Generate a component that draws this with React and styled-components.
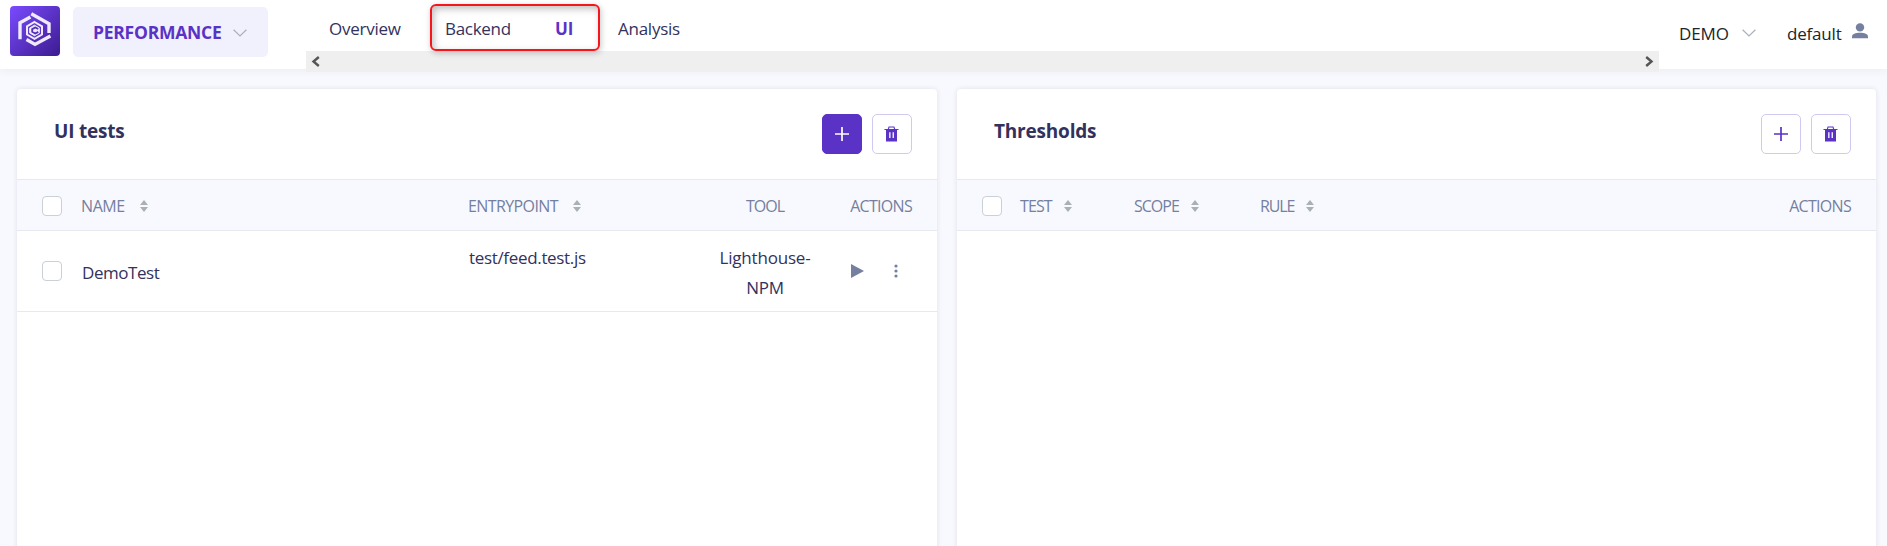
import React from 'react';
import styled, { createGlobalStyle } from 'styled-components';

const GlobalStyle = createGlobalStyle`
  * { box-sizing: border-box; }
  html, body { margin: 0; height: 100%; overflow: hidden; }
  body {
    background: #f8f9fe;
    color: #32325d;
    font-family: "Open Sans", "Noto Sans", sans-serif;
    font-size: 17px;
  }
  #root { height: 100%; }
`;

const Page = styled.div`
  height: 546px;
  overflow: hidden;
`;

const Header = styled.header`
  display: flex;
  align-items: flex-start;
  height: 69px;
  padding-left: 10px;
  background: #fff;
  box-shadow: 0 2px 8px rgba(50, 50, 93, 0.06);
`;

const Logo = styled.svg`
  display: block;
  width: 50px;
  height: 50px;
  margin-top: 6px;
`;

const Label = styled.span`
  white-space: nowrap;
  letter-spacing: ${(p) => p.$ls || 0}px;
`;

const SectionButton = styled.button`
  display: flex;
  align-items: center;
  gap: 12px;
  width: 195px;
  height: 50px;
  margin: 7px 38px 0 13px;
  padding: 0 0 0 20px;
  border: 0;
  border-radius: 5px;
  background: #f1f0fd;
  color: #5b32c6;
  font: 700 17.5px "Open Sans", "Noto Sans", sans-serif;
  svg { margin-top: 2px; }
`;

const Nav = styled.nav`
  width: 1353px;
  height: 72px;
`;

const Tabs = styled.div`
  display: flex;
  align-items: center;
  height: 51px;
  padding: 6px 0 0 23px;
`;

const Tab = styled.a`
  width: ${(p) => p.$w}px;
  line-height: 30px;
  white-space: nowrap;
  letter-spacing: ${(p) => p.$ls || 0}px;
  color: ${(p) => (p.$active ? '#5b32c6' : '#32325d')};
  font-weight: ${(p) => (p.$active ? 700 : 400)};
`;

const TabPair = styled.div`
  position: relative;
  display: flex;
  width: 173px;
`;

const Highlight = styled.div`
  position: absolute;
  left: -15px;
  top: -10px;
  width: 170px;
  height: 47px;
  border: 2px solid #f5151b;
  border-radius: 6px;
  box-shadow: 1px 2px 6px rgba(0, 0, 0, 0.22), inset 2px 3px 7px rgba(0, 0, 0, 0.25);
`;

const ScrollTrack = styled.div`
  display: flex;
  align-items: center;
  justify-content: space-between;
  height: 21px;
  padding: 0 5px;
  background: #efefef;
`;

const Account = styled.div`
  display: flex;
  align-items: center;
  height: 66px;
  padding-left: 20px;
  color: #212529;
`;

const Project = styled.div`
  display: flex;
  align-items: center;
  width: 108px;
  gap: 13px;
`;

const User = styled.div`
  display: flex;
  align-items: center;
  gap: 10px;
  svg { margin-bottom: 5px; }
`;

const Main = styled.main`
  display: grid;
  grid-template-columns: 920px 919px;
  gap: 20px;
  padding: 20px 0 0 17px;
`;

const Card = styled.section`
  height: 480px;
  border-radius: 4px 4px 0 0;
  background: #fff;
  box-shadow: 0 0 5px rgba(50, 50, 93, 0.12);
`;

const CardHeader = styled.div`
  display: flex;
  align-items: center;
  gap: 10px;
  height: 90px;
  padding: 0 25px 0 37px;
`;

const Title = styled.h2`
  flex: 1;
  margin: 0 0 6px;
  font-size: 19px;
  font-weight: 700;
  letter-spacing: ${(p) => p.$ls}px;
`;

const IconButton = styled.button`
  display: flex;
  align-items: center;
  justify-content: center;
  width: 40px;
  height: 40px;
  padding: 0;
  border: 1px solid ${(p) => (p.$primary ? '#5b32c6' : '#d2c9f0')};
  border-radius: 5px;
  background: ${(p) => (p.$primary ? '#5b32c6' : '#fff')};
  color: ${(p) => (p.$primary ? '#fff' : '#5b32c6')};
`;

const HeadRow = styled.div`
  display: grid;
  grid-template-columns: ${(p) => p.$cols};
  align-items: center;
  height: 52px;
  padding: 2px 25px 0;
  border: solid #e6e9f0;
  border-width: 1px 0;
  background: #f8f9fe;
  color: #757f9f;
  font-size: 16px;
`;

const HeadCell = styled.div`
  display: flex;
  align-items: center;
  justify-content: ${(p) => p.$justify || 'flex-start'};
  gap: ${(p) => p.$gap || 0}px;
`;

const BodyRow = styled.div`
  display: grid;
  grid-template-columns: ${(p) => p.$cols};
  align-items: center;
  height: 81px;
  padding: 0 25px;
  border-bottom: 1px solid #e6e9f0;
`;

const Cell = styled.div`
  line-height: 30px;
  padding: ${(p) => p.$pad || 0};
  align-self: ${(p) => (p.$top ? 'start' : 'center')};
  text-align: ${(p) => (p.$center ? 'center' : 'left')};
  letter-spacing: ${(p) => p.$ls || 0}px;
`;

const RowActions = styled.div`
  display: flex;
  align-items: center;
  gap: 30px;
  padding-left: 31px;
`;

const Check = styled.input`
  appearance: none;
  width: 20px;
  height: 20px;
  margin: 0;
  border: 1px solid #c9d0d6;
  border-radius: 4px;
  background: #fff;
`;

const Chevron = () => (
  <svg width="14" height="8" viewBox="0 0 14 8" fill="none" stroke="#a9b1bd" strokeWidth="1.2">
    <path d="M.6.7 7 7 13.4.7" />
  </svg>
);

const Sort = () => (
  <svg width="8" height="12" viewBox="0 0 8 12" fill="#a9b1b6">
    <path d="M4 0 8 5H0zM0 7h8l-4 5z" />
  </svg>
);

const Plus = () => (
  <svg width="16" height="16" viewBox="0 0 16 16" stroke="currentColor" strokeWidth="1.7">
    <path d="M8 1v14M1 8h14" />
  </svg>
);

const Trash = () => (
  <svg width="16" height="16" viewBox="0 0 16 16" fill="currentColor">
    <path
      fillRule="evenodd"
      d="M4.6 0.5h5.8l.8 2.4H14.5V4H13v11.5H2V4H.5V2.9h3.3zM5.4 1.6 5 2.9h5l-.4-1.3zM5.2 6.3v5.7h1.3V6.3zM8.6 6.3v5.7h1.3V6.3z"
    />
  </svg>
);

const Arrow = ({ flip }) => (
  <svg width="9" height="11" viewBox="0 0 9 11" fill="none" stroke="#555" strokeWidth="2.4">
    <path d={flip ? 'M1.2 1 6.5 5.5 1.2 10' : 'M7.8 1 2.5 5.5 7.8 10'} />
  </svg>
);

const Person = () => (
  <svg width="16" height="16" viewBox="0 0 16 16" fill="#757f9f">
    <circle cx="8" cy="4.4" r="4.2" />
    <path d="M0 15.2v-1.6C0 11 3.5 9.8 8 9.8s8 1.2 8 3.8v1.6z" />
  </svg>
);

const BrandLogo = () => (
  <Logo viewBox="0 0 50 50">
    <defs>
      <linearGradient id="brand" x1="0" y1="0" x2="1" y2="1">
        <stop offset="0" stopColor="#7a4bff" />
        <stop offset="1" stopColor="#3c1b8f" />
      </linearGradient>
    </defs>
    <rect width="50" height="50" rx="4" fill="url(#brand)" />
    <g fill="none" stroke="#efeafc" strokeWidth="3.4">
      <path d="M10 33.2V16.8L20.4 11" />
      <path d="M21.3 7.8 39 17.7V27" />
      <path d="M16.5 33.5 25 38.4 40.4 29.9" />
    </g>
    <path d="M24.5 16 32 20.3V28.5L24.5 32.8 17 28.5V20.3z" fill="#6038cc" stroke="#efeafc" strokeWidth="2" />
    <path d="M24.5 19.2 29.3 22V26.9L24.5 29.7 19.7 26.9V22z" fill="#efeafc" stroke="#efeafc" strokeWidth="1" />
    <path d="M28.3 23 25.2 21.4 22.2 23.1V25.8L25.2 27.5 28.3 25.9" fill="none" stroke="#5330b8" strokeWidth="1.8" />
  </Logo>
);

const TESTS_COLS = '39px 387px 242px 110px 92px';
const THRESHOLD_COLS = '38px 114px 126px 1fr auto';

export default function App() {
  return (
    <Page>
      <GlobalStyle />
      <Header>
        <BrandLogo />
        <SectionButton>
          <Label $ls={-0.25}>PERFORMANCE</Label>
          <Chevron />
        </SectionButton>
        <Nav>
          <Tabs>
            <Tab $w={116} $ls={-0.25}>Overview</Tab>
            <TabPair>
              <Tab $w={110} $ls={-0.3}>Backend</Tab>
              <Tab $w={62} $active>UI</Tab>
              <Highlight />
            </TabPair>
            <Tab $ls={-0.25}>Analysis</Tab>
          </Tabs>
          <ScrollTrack>
            <Arrow />
            <Arrow flip />
          </ScrollTrack>
        </Nav>
        <Account>
          <Project>
            <Label $ls={-0.1}>DEMO</Label>
            <Chevron />
          </Project>
          <User>
            <Label $ls={-0.2}>default</Label>
            <Person />
          </User>
        </Account>
      </Header>
      <Main>
        <Card>
          <CardHeader>
            <Title $ls={-0.2}>UI tests</Title>
            <IconButton $primary><Plus /></IconButton>
            <IconButton><Trash /></IconButton>
          </CardHeader>
          <HeadRow $cols={TESTS_COLS}>
            <Check type="checkbox" />
            <HeadCell $gap={15}><Label $ls={-0.4}>NAME</Label><Sort /></HeadCell>
            <HeadCell $gap={15}><Label $ls={-0.6}>ENTRYPOINT</Label><Sort /></HeadCell>
            <HeadCell $justify="center"><Label $ls={-1}>TOOL</Label></HeadCell>
            <HeadCell $justify="flex-end"><Label $ls={-0.7}>ACTIONS</Label></HeadCell>
          </HeadRow>
          <BodyRow $cols={TESTS_COLS}>
            <Check type="checkbox" />
            <Cell $pad="3px 0 0 1px" $ls={-0.45}>DemoTest</Cell>
            <Cell $top $pad="12px 0 0 1px" $ls={-0.33}>test/feed.test.js</Cell>
            <Cell $top $center $pad="12px 0 0" $ls={-0.2}>Lighthouse-<br />NPM</Cell>
            <RowActions>
              <svg width="13" height="14" viewBox="0 0 13 14" fill="#757f9f"><path d="M0 0 13 7 0 14z" /></svg>
              <svg width="4" height="14" viewBox="0 0 4 14" fill="#757f9f">
                <circle cx="2" cy="2" r="1.6" /><circle cx="2" cy="7" r="1.6" /><circle cx="2" cy="12" r="1.6" />
              </svg>
            </RowActions>
          </BodyRow>
        </Card>
        <Card>
          <CardHeader>
            <Title $ls={-0.2}>Thresholds</Title>
            <IconButton><Plus /></IconButton>
            <IconButton><Trash /></IconButton>
          </CardHeader>
          <HeadRow $cols={THRESHOLD_COLS}>
            <Check type="checkbox" />
            <HeadCell $gap={12}><Label $ls={-0.9}>TEST</Label><Sort /></HeadCell>
            <HeadCell $gap={12}><Label $ls={-1}>SCOPE</Label><Sort /></HeadCell>
            <HeadCell $gap={12}><Label $ls={-1.1}>RULE</Label><Sort /></HeadCell>
            <HeadCell><Label $ls={-0.7}>ACTIONS</Label></HeadCell>
          </HeadRow>
        </Card>
      </Main>
    </Page>
  );
}
